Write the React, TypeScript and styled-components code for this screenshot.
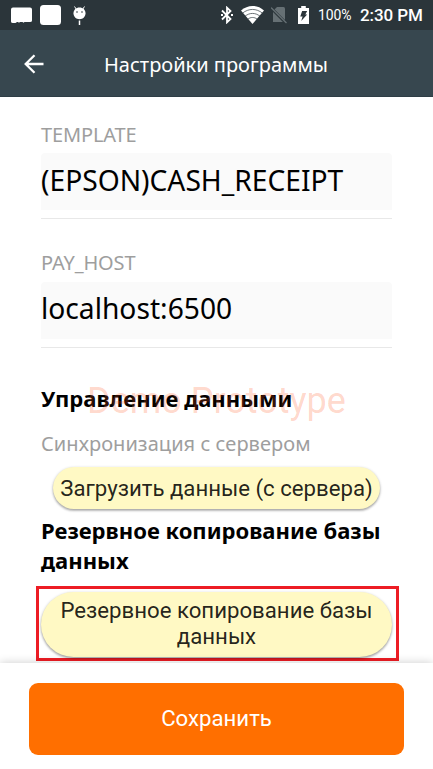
import React from 'react';
import styled, { createGlobalStyle } from 'styled-components';

const Global = createGlobalStyle`
  * { box-sizing: border-box; }
  html, body { margin: 0; padding: 0; background: #fff; overflow: hidden; }
`;

const Screen = styled.div`
  position: relative;
  display: flex;
  flex-direction: column;
  width: 433px;
  height: 769px;
  overflow: hidden;
  background: #fff;
  font-family: 'Noto Sans', sans-serif;
  color: #000;
`;

const StatusBar = styled.div`
  flex: none;
  display: flex;
  justify-content: space-between;
  height: 30px;
  padding: 0 10px 0 11px;
  background: #2b353a;
  color: #fff;
  font-family: Roboto, sans-serif;
`;

const StatusGroup = styled.div`
  display: flex;
  align-items: center;
  height: 30px;
`;

const StatusIcon = styled.svg<{ $gap?: number }>`
  display: block;
  flex: none;
  margin-right: ${p => p.$gap ?? 0}px;
`;

const Battery = styled.span`
  width: 33px;
  margin-right: 9px;
  font-size: 14px;
  line-height: 31px;
  letter-spacing: -0.1px;
  white-space: nowrap;
`;

const Clock = styled.span`
  width: 63px;
  font-size: 17px;
  font-weight: 500;
  line-height: 32px;
  letter-spacing: -0.1px;
  white-space: nowrap;
`;

const AppBar = styled.header`
  flex: none;
  display: flex;
  align-items: center;
  height: 67px;
  padding-left: 24px;
  background: #37474f;
  border-bottom: 1px solid #2f3e46;
  color: #fff;
`;

const BackIcon = styled.svg`
  display: block;
  flex: none;
  margin-top: 1px;
`;

const Title = styled.h1`
  margin: 3px 0 0 60px;
  font-size: 20px;
  font-weight: 400;
  line-height: 28px;
  white-space: nowrap;
`;

const Content = styled.main`
  flex: none;
  display: flex;
  flex-direction: column;
  height: 566px;
  padding: 23px 41px 0;
  overflow: hidden;
`;

const Field = styled.label`
  display: flex;
  flex-direction: column;
  height: 99px;
  margin-bottom: 30px;
  border-bottom: 1px solid #e8e8e8;
`;

const Caption = styled.span<{ $spacing?: number; $drop?: number }>`
  height: 28px;
  font-size: 20px;
  line-height: ${p => 28 + 2 * (p.$drop ?? 0)}px;
  letter-spacing: ${p => p.$spacing ?? -0.12}px;
  color: #9e9e9e;
  white-space: nowrap;
`;

const Value = styled.div<{ $line: number }>`
  height: 57px;
  margin-top: 5px;
  border-radius: 4px 4px 0 0;
  background: #fafafa;
  font-size: 28.2px;
  line-height: ${p => p.$line}px;
  white-space: nowrap;
`;

const Heading = styled.h2<{ $top: number }>`
  margin: ${p => p.$top}px 0 0;
  font-size: 22.05px;
  font-weight: 700;
  line-height: 30px;
`;

const Hint = styled(Caption)`
  margin-top: 16px;
`;

const Pill = styled.button`
  display: block;
  flex: none;
  align-self: center;
  width: 327px;
  height: 42px;
  margin: 10px 0 0;
  padding: 0 0 1px;
  border: 0;
  border-radius: 33px;
  background: #fff9c4;
  box-shadow: 0 1px 3px rgba(0, 0, 0, 0.3), 0 2px 2px rgba(0, 0, 0, 0.14);
  color: rgba(0, 0, 0, 0.87);
  font-family: Roboto, sans-serif;
  font-size: 22.2px;
  line-height: 26px;
  white-space: nowrap;
`;

const WidePill = styled(Pill)`
  width: 351px;
  height: 65px;
  margin: 0;
  padding-bottom: 3px;
`;

const Highlight = styled.div`
  flex: none;
  display: flex;
  width: 363px;
  height: 75px;
  margin: 11px 0 0 -5px;
  padding: 2px 0 0 2px;
  border: 3px solid #ed1c24;
`;

const Watermark = styled.div`
  position: absolute;
  top: 380px;
  left: 87px;
  font-family: Roboto, sans-serif;
  font-size: 36px;
  line-height: 42px;
  color: rgba(255, 87, 34, 0.24);
  white-space: nowrap;
  pointer-events: none;
`;

const Footer = styled.footer`
  flex: none;
  height: 106px;
  padding: 20px 29px 0;
  background: #fff;
  box-shadow: 0 0 9px rgba(0, 0, 0, 0.2);
`;

const SaveButton = styled.button`
  display: block;
  width: 375px;
  height: 72px;
  padding: 0 0 2px;
  border: 0;
  border-radius: 9px;
  background: #ff6f00;
  color: #fff;
  font-family: Roboto, sans-serif;
  font-size: 22.2px;
  line-height: 70px;
`;

export default function App() {
  return (
    <Screen>
      <Global />
      <StatusBar>
        <StatusGroup>
          <StatusIcon $gap={8} width="21" height="17" viewBox="0 0 21 17" fill="#fff">
            <path d="M2 .5h17q2 0 2 2v11q0 1.500-2 1.500h-5.500l-1 .7-1-.7H9l-1 .7-1-.7H6l-1.500 1H2q-2 0-2-1.500V2.500Q0 .5 2 .5z" />
          </StatusIcon>
          <StatusIcon $gap={12} width="21" height="20" viewBox="0 0 21 20" fill="#fff">
            <rect width="21" height="20" rx="3.500" />
          </StatusIcon>
          <StatusIcon width="13" height="19" viewBox="0 0 13 19">
            <path d="M1.500.5l2 3M11.500.5l-2 3" stroke="#fff" />
            <path d="M6.500 1.500c3.500 0 6 2.400 6 5.800 0 3.200-2.400 6-6 6s-6-2.800-6-6c0-3.400 2.500-5.800 6-5.800z" fill="#fff" />
            <circle cx="4" cy="6" r=".8" fill="#2b353a" />
            <circle cx="9" cy="6" r=".8" fill="#2b353a" />
            <path d="M6.500 14.500V19" stroke="#fff" strokeWidth="1.500" />
          </StatusIcon>
        </StatusGroup>
        <StatusGroup>
          <StatusIcon $gap={8} width="12" height="18" viewBox="0 0 12 18" fill="none" stroke="#fff" strokeWidth="1.800">
            <path d="M1 4.500l8.500 8.500L6 16.300V1.700L9.500 5 1 13.500" />
            <path d="M0 9h2M10 9h2" />
          </StatusIcon>
          <StatusIcon $gap={7} width="23" height="18" viewBox="0 0 24 18" preserveAspectRatio="none">
            <path d="M12 18L0 4.500C7-1.500 17-1.500 24 4.500z" fill="#fff" />
            <path d="M1.500 7.200c6.500-5 14.500-5 21 0M4.200 10.200c4.800-3.700 10.800-3.700 15.600 0M7 13.200c3-2.300 7-2.300 10 0" fill="none" stroke="#2b353a" strokeWidth=".7" />
          </StatusIcon>
          <StatusIcon $gap={11} width="16" height="18" viewBox="0 0 16 18">
            <path d="M6 1h6.500q1.500 0 1.500 1.500V16H2V5z" fill="#667074" />
            <path d="M0 2l15 15" stroke="#2b353a" strokeWidth="3" />
            <path d="M0 1.500l15.500 15.500" stroke="#667074" strokeWidth="1.300" />
          </StatusIcon>
          <StatusIcon $gap={9} width="11" height="18" viewBox="0 0 12 18" preserveAspectRatio="none">
            <path d="M3.500 0h5v2H12v16H0V2h3.500z" fill="#fff" />
            <path d="M4.500 5H10L8 8.500h2L3.500 15 5 10.500H2.500z" fill="#2b353a" />
          </StatusIcon>
          <Battery>100%</Battery>
          <Clock>2:30 PM</Clock>
        </StatusGroup>
      </StatusBar>
      <AppBar>
        <BackIcon width="20" height="20" viewBox="0 0 20 20" fill="none" stroke="#fff" strokeWidth="2.300">
          <path d="M19.500 10H2M10.500 1.200L1.700 10l8.800 8.800" />
        </BackIcon>
        <Title>Настройки программы</Title>
      </AppBar>
      <Content>
        <Field>
          <Caption $drop={1}>TEMPLATE</Caption>
          <Value $line={54}>(EPSON)CASH_RECEIPT</Value>
        </Field>
        <Field>
          <Caption>PAY_HOST</Caption>
          <Value $line={52}>localhost:6500</Value>
        </Field>
        <Heading $top={5}>Управление данными</Heading>
        <Hint $spacing={0.05} $drop={1}>Синхронизация с сервером</Hint>
        <Pill>Загрузить данные (с сервера)</Pill>
        <Heading $top={6}>Резервное копирование базы данных</Heading>
        <Highlight>
          <WidePill>Резервное копирование базы<br />данных</WidePill>
        </Highlight>
      </Content>
      <Footer>
        <SaveButton>Сохранить</SaveButton>
      </Footer>
      <Watermark>Demo Prototype</Watermark>
    </Screen>
  );
}
